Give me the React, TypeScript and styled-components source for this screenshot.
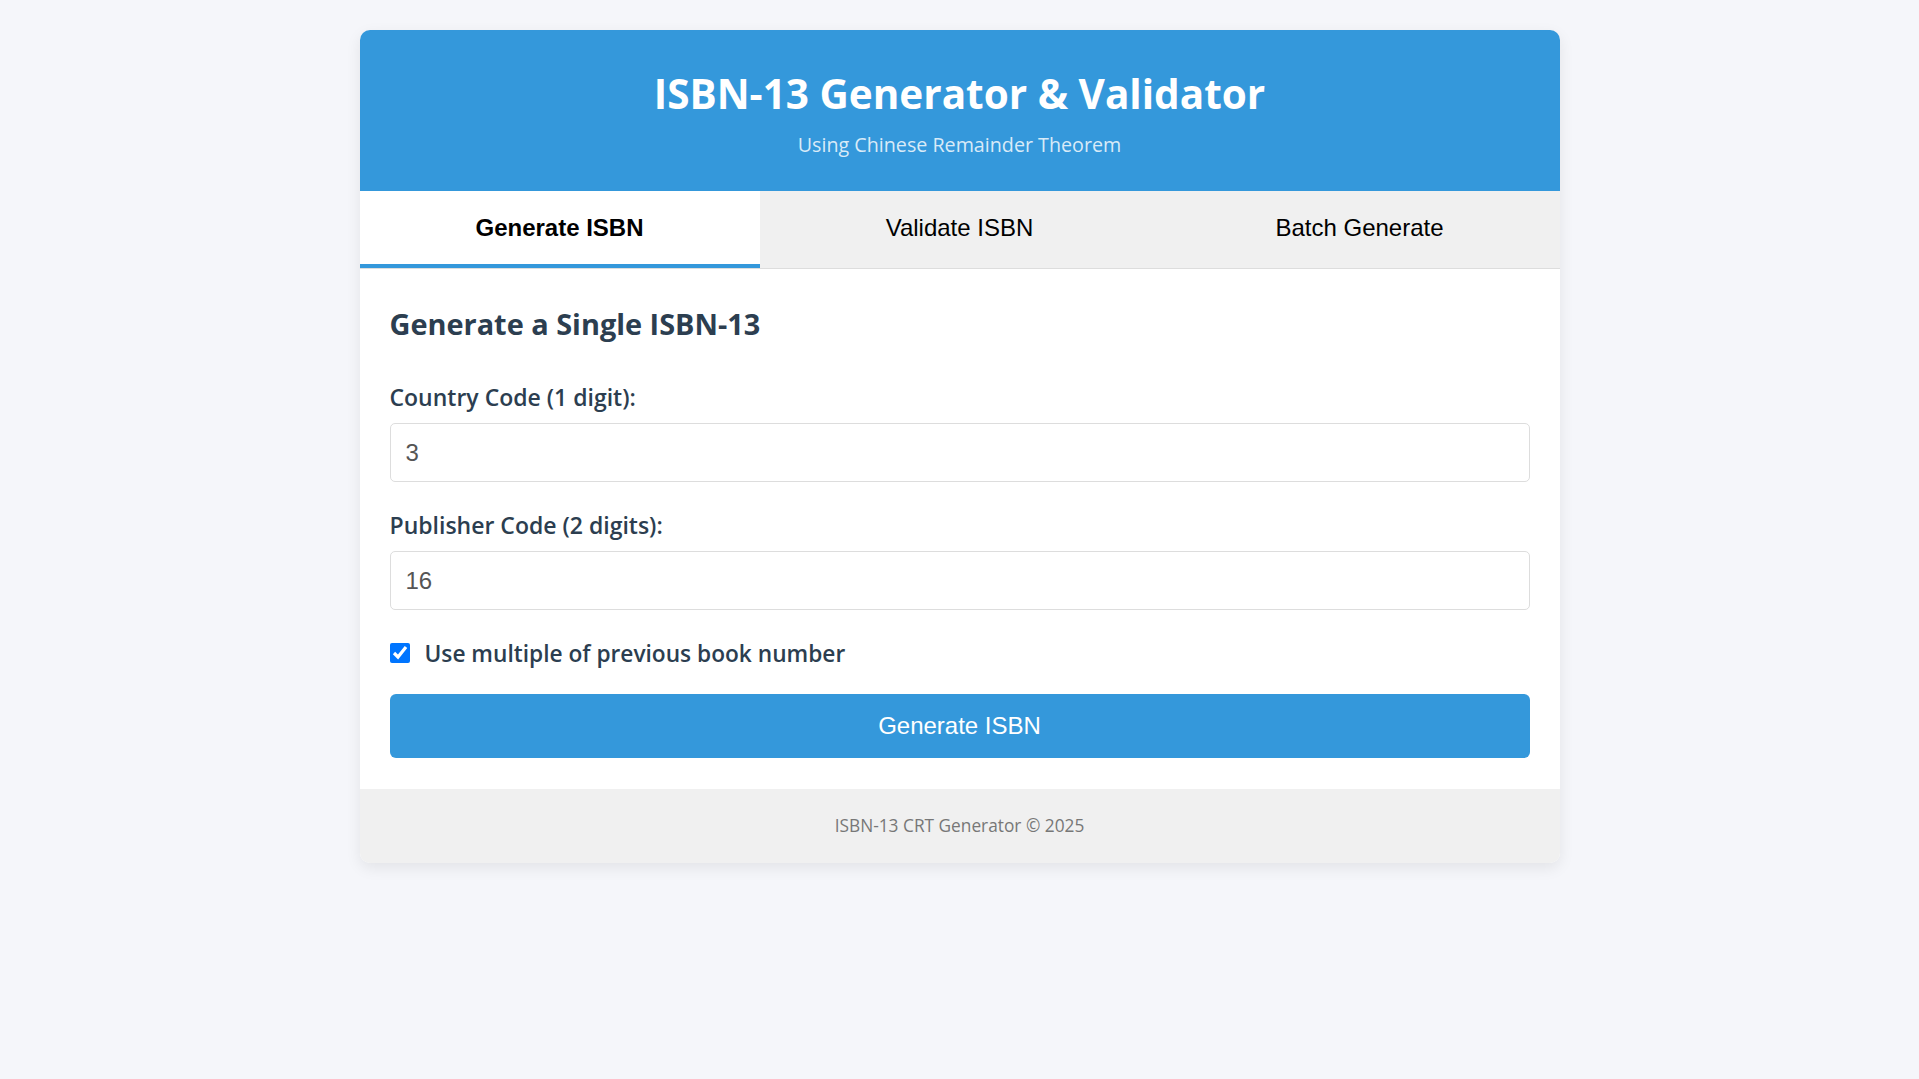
import React, { useState } from "react";
import styled, { createGlobalStyle } from "styled-components";

const GlobalStyle = createGlobalStyle`
  html, body {
    margin: 0;
    padding: 0;
    background: #f5f6fa;
  }
  body {
    font-family: "Open Sans", "Noto Sans", sans-serif;
    color: #2c3e50;
  }
  * { box-sizing: border-box; }
`;

const Page = styled.div`
  padding: 30px 0;
  display: flex;
  justify-content: center;
`;

const Card = styled.div`
  width: 1200px;
  background: #ffffff;
  border-radius: 10px;
  overflow: hidden;
  box-shadow: 0 5px 15px rgba(0, 0, 0, 0.08);
`;

const Header = styled.header`
  background: #3498db;
  color: #ffffff;
  text-align: center;
  padding: 40px 20px 32px;
`;

const Title = styled.h1`
  margin: 0;
  font-size: 40.5px;
  line-height: 48px;
  font-weight: 700;
`;

const Subtitle = styled.p`
  margin: 13px 0 0;
  font-size: 19.7px;
  line-height: 28px;
  font-weight: 400;
  color: rgba(255, 255, 255, 0.82);
`;

const TabBar = styled.div`
  display: grid;
  grid-template-columns: repeat(3, 1fr);
  border-bottom: 1px solid #dddddd;
`;

const Tab = styled.button<{ $active?: boolean }>`
  appearance: none;
  border: none;
  border-bottom: 4px solid ${(p) => (p.$active ? "#3498db" : "transparent")};
  background: ${(p) => (p.$active ? "#ffffff" : "#f0f0f0")};
  padding: 22.5px 10px;
  font-family: "Liberation Sans", Arial, sans-serif;
  font-size: 24px;
  line-height: 28px;
  font-weight: ${(p) => (p.$active ? 700 : 400)};
  color: #000000;
  cursor: pointer;
`;

const Content = styled.main`
  padding: 30px 30px 31px;
  display: flex;
  flex-direction: column;
`;

const Heading = styled.h2`
  margin: 8px 0 42px;
  font-size: 28.9px;
  line-height: 34px;
  font-weight: 700;
  color: #2c3e50;
`;

const FormGroup = styled.div`
  display: flex;
  flex-direction: column;
  margin-bottom: 29px;
`;

const Label = styled.label`
  font-size: 23px;
  line-height: 28px;
  font-weight: 600;
  color: #2c3e50;
  margin-bottom: 12px;
`;

const Input = styled.input`
  width: 100%;
  height: 59px;
  padding: 0 15px;
  border: 1px solid #dddddd;
  border-radius: 5px;
  font-family: "Liberation Sans", Arial, sans-serif;
  font-size: 24px;
  color: #555555;
  background: #ffffff;
  outline: none;
`;

const CheckRow = styled.label`
  display: flex;
  align-items: center;
  gap: 15px;
  height: 24px;
  margin: 2px 0 29px;
  font-size: 22.7px;
  font-weight: 600;
  color: #2c3e50;
  cursor: pointer;
`;

const Checkbox = styled.input`
  width: 20px;
  height: 20px;
  margin: 0;
  accent-color: #0075ff;
`;

const PrimaryButton = styled.button`
  width: 100%;
  height: 64px;
  border: none;
  border-radius: 6px;
  background: #3498db;
  color: #ffffff;
  font-family: "Liberation Sans", Arial, sans-serif;
  font-size: 24px;
  cursor: pointer;
`;

const Footer = styled.footer`
  background: #f0f0f0;
  padding: 25px 20px;
  text-align: center;
  font-size: 17.3px;
  line-height: 24px;
  color: #777777;
`;

export default function App() {
  const [tab, setTab] = useState(0);
  const [country, setCountry] = useState("3");
  const [publisher, setPublisher] = useState("16");
  const [multiple, setMultiple] = useState(true);
  const tabs = ["Generate ISBN", "Validate ISBN", "Batch Generate"];

  return (
    <>
      <GlobalStyle />
      <Page>
        <Card>
          <Header>
            <Title>ISBN-13 Generator &amp; Validator</Title>
            <Subtitle>Using Chinese Remainder Theorem</Subtitle>
          </Header>
          <TabBar>
            {tabs.map((t, i) => (
              <Tab key={t} $active={tab === i} onClick={() => setTab(i)}>
                {t}
              </Tab>
            ))}
          </TabBar>
          <Content>
            <Heading>Generate a Single ISBN-13</Heading>
            <FormGroup>
              <Label htmlFor="country">Country Code (1 digit):</Label>
              <Input
                id="country"
                value={country}
                onChange={(e) => setCountry(e.target.value)}
              />
            </FormGroup>
            <FormGroup>
              <Label htmlFor="publisher">Publisher Code (2 digits):</Label>
              <Input
                id="publisher"
                value={publisher}
                onChange={(e) => setPublisher(e.target.value)}
              />
            </FormGroup>
            <CheckRow>
              <Checkbox
                type="checkbox"
                checked={multiple}
                onChange={(e) => setMultiple(e.target.checked)}
              />
              Use multiple of previous book number
            </CheckRow>
            <PrimaryButton>Generate ISBN</PrimaryButton>
          </Content>
          <Footer>ISBN-13 CRT Generator © 2025</Footer>
        </Card>
      </Page>
    </>
  );
}
